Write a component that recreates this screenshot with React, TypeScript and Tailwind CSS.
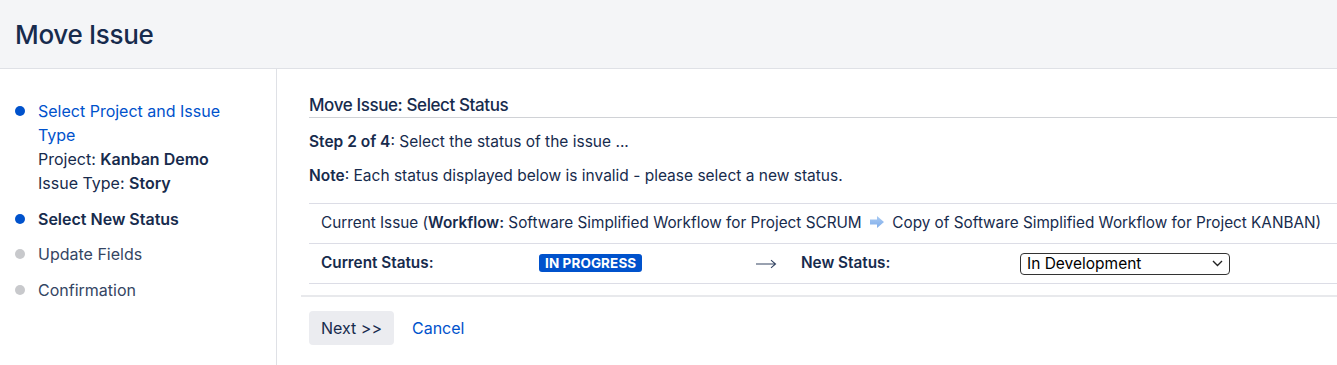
import React from 'react';

const font = { fontFamily: 'Inter, "Liberation Sans", Arial, sans-serif' };

type Step = {
  label: string;
  state: 'done' | 'current' | 'todo';
  details?: { label: string; value: string }[];
};

const steps: Step[] = [
  {
    label: 'Select Project and Issue Type',
    state: 'done',
    details: [
      { label: 'Project', value: 'Kanban Demo' },
      { label: 'Issue Type', value: 'Story' },
    ],
  },
  { label: 'Select New Status', state: 'current' },
  { label: 'Update Fields', state: 'todo' },
  { label: 'Confirmation', state: 'todo' },
];

function StepList() {
  return (
    <ul className="flex flex-col gap-[11.5px] pl-[15px] pt-[30px] text-[16px] leading-6 text-[#172b4d]">
      {steps.map((step) => (
        <li key={step.label} className="flex items-start gap-[13px]">
          <span
            className={
              'mt-[7px] h-[10px] w-[10px] shrink-0 rounded-full ' +
              (step.state === 'todo' ? 'bg-[#c8c9cc]' : 'bg-[#0052cc]')
            }
          />
          <div className="w-[200px]">
            {step.state === 'done' ? (
              <a className="text-[#0052cc]">{step.label}</a>
            ) : step.state === 'current' ? (
              <span className="font-semibold">{step.label}</span>
            ) : (
              <span className="text-[#344563]">{step.label}</span>
            )}
            {step.details?.map((d) => (
              <div key={d.label}>
                {d.label}: <b className="font-semibold">{d.value}</b>
              </div>
            ))}
          </div>
        </li>
      ))}
    </ul>
  );
}

function WorkflowArrow() {
  return (
    <svg width="16" height="14" viewBox="0 0 16 14" className="mx-[3px] inline-block align-[-1px]">
      <defs>
        <linearGradient id="wf" x1="0" y1="0" x2="0" y2="1">
          <stop offset="0" stopColor="#a9cbf3" />
          <stop offset="1" stopColor="#7fadea" />
        </linearGradient>
      </defs>
      <path d="M1 4.5h7V1l7 6-7 6V9.5H1z" fill="url(#wf)" />
    </svg>
  );
}

export default function App() {
  return (
    <div className="min-h-[365px] bg-white text-[#172b4d]" style={font}>
      <header className="flex h-[69px] items-center border-b border-[#dfe1e6] bg-[#f4f5f7] px-[15px]">
        <h1 className="text-[26px] font-medium tracking-[-0.3px] text-[#172b4d]">Move Issue</h1>
      </header>
      <div className="flex">
        <aside className="h-[296px] w-[277px] shrink-0 border-r border-[#dfe1e6]">
          <StepList />
        </aside>
        <main className="flex-1 pl-[24px] pt-[24px]">
          <div className="pl-[8px]">
            <h2 className="border-b border-[#d0d2d6] text-[17px] font-medium leading-6 tracking-[-0.4px] text-[#172b4d]">
              Move Issue: Select Status
            </h2>
            <p className="mt-[14px] text-[15.5px] leading-5">
              <b className="font-semibold">Step 2 of 4</b>: Select the status of the issue ...
            </p>
            <p className="mt-[14px] text-[15.5px] leading-5">
              <b className="font-semibold">Note</b>: Each status displayed below is invalid - please select a new
              status.
            </p>
            <table className="mt-[17px] w-full table-fixed border-collapse text-[15.3px]">
              <colgroup>
                <col className="w-[230px]" />
                <col className="w-[217px]" />
                <col className="w-[45px]" />
                <col className="w-[219px]" />
                <col />
              </colgroup>
              <tbody>
                <tr className="h-[40px] border-y border-[#dcdde6]">
                  <td colSpan={5} className="whitespace-nowrap pl-3">
                    Current Issue (<b className="font-semibold">Workflow:</b> Software Simplified Workflow for
                    Project SCRUM <WorkflowArrow /> Copy of Software Simplified Workflow for Project KANBAN)
                  </td>
                </tr>
                <tr className="h-[40px] border-b border-[#dcdde6]">
                  <td className="pl-3 font-semibold">Current Status:</td>
                  <td>
                    <span className="inline-block rounded-[3px] bg-[#0052cc] px-[6px] text-[13.5px] font-bold leading-[18px] tracking-[0.1px] text-white uppercase">
                      In Progress
                    </span>
                  </td>
                  <td>
                    <svg width="21" height="10" viewBox="0 0 21 10" className="block">
                      <path d="M0 5h19.5M15 1.2l4.5 3.8L15 8.8" fill="none" stroke="#344563" strokeWidth="1.1" />
                    </svg>
                  </td>
                  <td className="font-semibold">New Status:</td>
                  <td>
                    <div className="flex h-[22px] w-[210px] items-center justify-between rounded-[4px] border border-[#333] bg-white pl-[6px] pr-[6px] text-[15.5px] text-black">
                      <span>In Development</span>
                      <svg width="11" height="7" viewBox="0 0 11 7">
                        <path d="M1 1l4.5 4.5L10 1" fill="none" stroke="#222" strokeWidth="1.4" />
                      </svg>
                    </div>
                  </td>
                </tr>
              </tbody>
            </table>
          </div>
          <div className="mt-[11px] border-t-2 border-[#e8e9ec] pl-[8px] pt-[14px]">
            <div className="flex items-center gap-[18px] text-[16px]">
              <button className="h-[34px] rounded-[4px] bg-[#ebecf0] px-[12px] text-[#172b4d]">Next &gt;&gt;</button>
              <a className="text-[#0052cc]">Cancel</a>
            </div>
          </div>
        </main>
      </div>
    </div>
  );
}
